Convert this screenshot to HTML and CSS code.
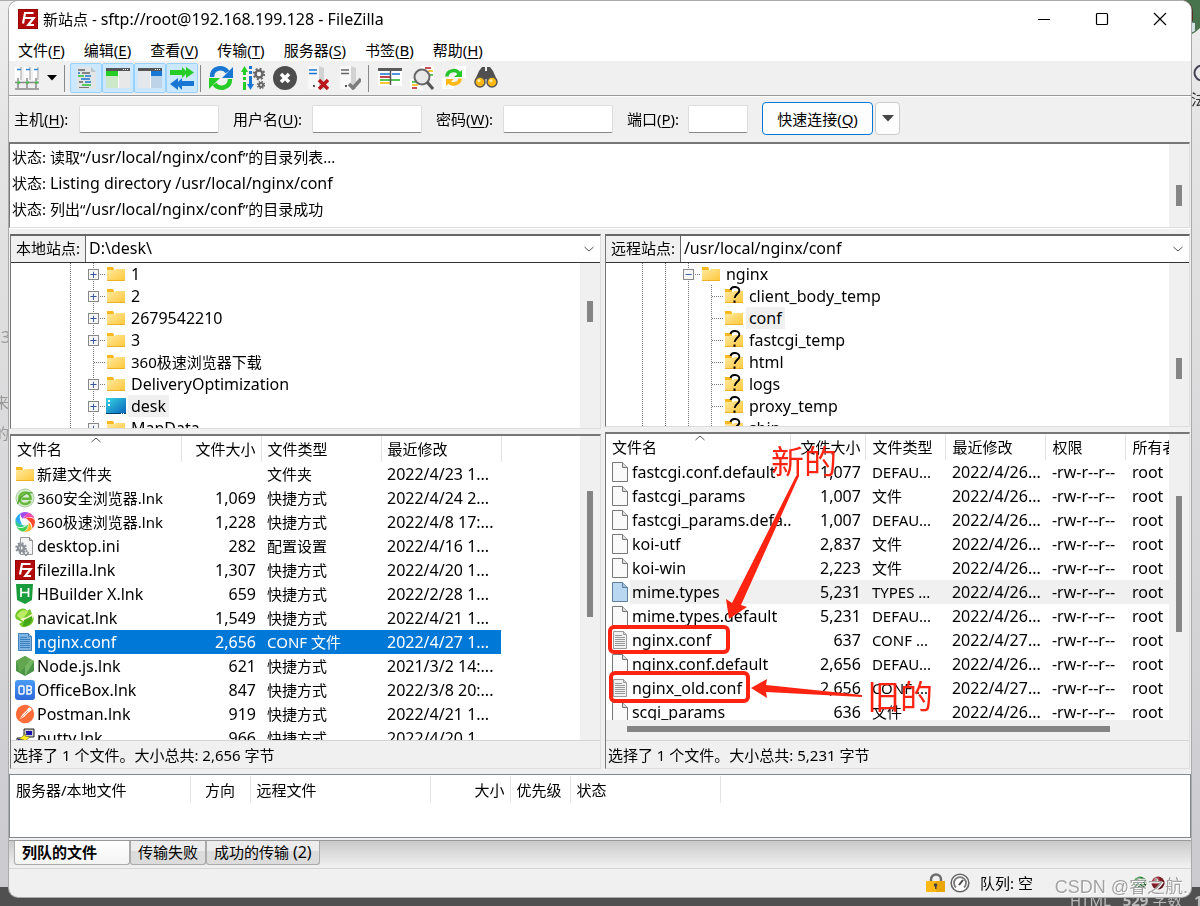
FILE: index.html
```html
<!DOCTYPE html>
<html lang="zh-CN">
<head>
<meta charset="utf-8">
<title>新站点 - FileZilla</title>
<link rel="stylesheet" href="styles.css">
</head>
<body>
<svg class="defs" aria-hidden="true">
  <defs>
    <linearGradient id="gold" x1="0" y1="0" x2="1" y2="1"><stop offset="0" stop-color="#ffe9a0"/><stop offset="1" stop-color="#ffc83a"/></linearGradient>
    <linearGradient id="sea" x1="0" y1="0" x2="1" y2="1"><stop offset="0" stop-color="#35d6e4"/><stop offset="1" stop-color="#0a63b8"/></linearGradient>
    <linearGradient id="blueapp" x1="0" y1="0" x2="0" y2="1"><stop offset="0" stop-color="#4a9bf5"/><stop offset="1" stop-color="#2e68d8"/></linearGradient>
    <radialGradient id="ledg" cx=".35" cy=".3" r=".8"><stop offset="0" stop-color="#9fe0a0"/><stop offset=".4" stop-color="#2b8a35"/><stop offset="1" stop-color="#0d4a15"/></radialGradient>
    <radialGradient id="ledr" cx=".35" cy=".3" r=".8"><stop offset="0" stop-color="#e0a0a0"/><stop offset=".4" stop-color="#8a1f28"/><stop offset="1" stop-color="#4a0a10"/></radialGradient>
  </defs>
  <symbol id="folder" viewBox="0 0 20 20"><path d="M1 3h6l1 2v5H1z" fill="#f8b820"/><path d="M1 6h8l1-1h9v12H1z" fill="url(#gold)"/><path d="M1 16h18v1H1z" fill="#eeb12c"/></symbol>
  <symbol id="ask" viewBox="0 0 20 20"><use href="#folder"/><path d="M6.500 4C7 1.600 9 .8 11.200 1c2.600.2 4.300 1.600 4.100 3.800-.2 2.700-4.300 3.500-4.700 7.200" fill="none" stroke="#000" stroke-width="1.900"/><path d="M9.500 14.500h2v2.300h-2z"/></symbol>
  <symbol id="desk" viewBox="0 0 20 20"><path d="M0 2h20v16H0z" fill="url(#sea)"/><path d="M0 17h20v1H0z" fill="#06406f"/><path d="M2 4h2v2H2zM2 8h2v2H2zM15 17h1v1h-1zM17 17h1v1h-1z" fill="#fff"/></symbol>
  <symbol id="file" viewBox="0 0 20 20"><path d="M2.500.5h10l5 5v14h-15z" fill="#fafafa" stroke="#777"/><path d="M12.500.5v5h5" fill="#ddd" stroke="#777"/></symbol>
  <symbol id="filesel" viewBox="0 0 20 20"><path d="M2.500.5h10l5 5v14h-15z" fill="#b9d7f1" stroke="#5f7f9c"/><path d="M12.500.5v5h5" fill="#9fc3e2" stroke="#5f7f9c"/></symbol>
  <symbol id="text" viewBox="0 0 20 20"><path d="M3.500 1.500h10l3 3v14h-13z" fill="#f1f1f1" stroke="#999"/><path d="M13.500 1.500v3h3" fill="#ccc" stroke="#999"/><path d="M5 5.500h7M5 7.500h10M5 9.500h10M5 11.500h10M5 13.500h10M5 15.500h10" stroke="#999"/></symbol>
  <symbol id="textsel" viewBox="0 0 20 20"><path d="M3.500 1.500h10l3 3v14h-13z" fill="#7db4e4" stroke="#4281b8"/><path d="M13.500 1.500v3h3" fill="#a8cdec" stroke="#4281b8"/><path d="M5 5.500h7M5 7.500h10M5 9.500h10M5 11.500h10M5 13.500h10M5 15.500h10" stroke="#3b7fbc"/></symbol>
  <symbol id="ie" viewBox="0 0 20 20"><circle cx="10" cy="10" r="9.300" fill="#d9ecd3"/><circle cx="10" cy="10" r="9" fill="none" stroke="#a8cf9b"/><path d="M15.300 13c-1 2-3 3-5.200 3-3.300 0-5.600-2.500-5.600-5.800C4.500 6.800 7 4.500 10 4.500c3.500 0 5.600 2.600 5.500 6.200H6.500" fill="none" stroke="#67b83a" stroke-width="2.600"/><path d="M2.500 16c2-7 9-13 15-11" fill="none" stroke="#4ea52c" stroke-width="1.300"/></symbol>
  <symbol id="wheel" viewBox="0 0 20 20"><path d="M8 7C6 5 5 3 5.500 1.300A10 10 0 0 1 14.500 1C11 2 9 4 8 7z" fill="#a04df0"/><path d="M9 7c0-4 3-6 6-6a10 10 0 0 1 4.500 6C16 4 12 5 9 7z" fill="#ee4cb4"/><path d="M10 7c4-3 8-1 9.700 1a10 10 0 0 1-2.700 9c1-4-1-8-7-10z" fill="#ff4a30"/><path d="M13 10c3 2 4 5 3.500 7.500a10 10 0 0 1-8 2.300c4-1 6-5 4.500-9.800z" fill="#ffb529"/><path d="M13 12c0 4-2 7-5 7.700a10 10 0 0 1-6.500-5C5 17 10 16 13 12z" fill="#3ed04f"/><path d="M11 13c-4 3-8 3-10 0A10 10 0 0 1 1 6c0 4 4 8 10 7z" fill="#31c98b"/><path d="M8 13C3 12 0 9 1 6a10 10 0 0 1 4.500-4.700C4 5 5 10 8 13z" fill="#29a8ff"/><circle cx="10" cy="10" r="3.600" fill="#fff"/></symbol>
  <symbol id="ini" viewBox="0 0 20 20"><path d="M5.500 1.500h9l3 3v14h-12z" fill="#f4f4f4" stroke="#999"/><path d="M14.500 1.500v3h3" fill="#ccc" stroke="#888"/><circle cx="6" cy="12" r="3" fill="none" stroke="#8b9299" stroke-width="2.500"/><circle cx="6" cy="12" r="4.800" fill="none" stroke="#8b9299" stroke-width="2" stroke-dasharray="2 1.770"/><circle cx="11" cy="17" r="2" fill="none" stroke="#8b9299" stroke-width="1.800" stroke-dasharray="1.500 .6"/></symbol>
  <symbol id="fz" viewBox="0 0 20 20"><path d="M0 0h20v20H0z" fill="#b30b0b"/><path d="M.5.5h19v19H.5z" fill="none" stroke="#700" stroke-dasharray="1 1"/><path d="M5 14.500L7 4h8.500M6 9h5.500M10.500 9h5.200l-5.400 7h5.700" fill="none" stroke="#fff" stroke-width="2.200"/></symbol>
  <symbol id="hb" viewBox="0 0 20 20"><path d="M1 0h17l-1 16-7 4-8-4z" fill="#1b9c3c"/><path d="M6 4v9M13.500 4v9M6 8.500h7.500" stroke="#fff" stroke-width="1.700"/></symbol>
  <symbol id="navi" viewBox="0 0 20 20"><path d="M1 5c4-6 10-5 11-2l3-2 3 7c3 7-5 12-11 11l-3-3 3-2-6-3c-1-2-1-4 0-6z" fill="#74c82a"/><path d="M2 8c2-6 9-7 11-4L7 12z" fill="#b9ec62"/><path d="M5 11l7-2 6-4c1 4-1 9-7 10z" fill="#f5f8c7"/><path d="M9 12l8-4c1 7-4 11-9 10z" fill="#43a718"/></symbol>
  <symbol id="node" viewBox="0 0 20 20"><path d="M10 0l9 5v10l-9 5-9-5V5z" fill="#4b9347"/><path d="M10 0l9 5-9 15z" fill="#75b864"/><path d="M1 5L10 0l5 4L5 17z" fill="#62a74f"/></symbol>
  <symbol id="obox" viewBox="0 0 20 20"><rect width="20" height="20" rx="3" fill="url(#blueapp)"/><rect x="4" y="6" width="5" height="8" rx="1.500" fill="none" stroke="#fff" stroke-width="1.400"/><path d="M12 6h2.500q1.800 0 1.800 2t-1.800 2H12h2.500q1.800 0 1.800 2t-1.800 2H12z" fill="none" stroke="#fff" stroke-width="1.400"/></symbol>
  <symbol id="post" viewBox="0 0 20 20"><circle cx="10" cy="10" r="9.200" fill="#ff6c37"/><path d="M5 15l2-4 6-6 2 2-6 6z" fill="#fff"/><path d="M6 14l7-7" stroke="#ff9a76"/><circle cx="14.500" cy="5.500" r="2" fill="#fff"/></symbol>
  <symbol id="putty" viewBox="0 0 20 20"><path d="M9 1h10v8H9z" fill="#ccc" stroke="#222"/><path d="M11 3h6v4h-6z" fill="#1510b0"/><path d="M2 10h9v8H2z" fill="#ccc" stroke="#222"/><path d="M3 11h6v4H3z" fill="#1510b0"/><path d="M12 5l-8 6 5 1-2 4 8-7-5-1z" fill="#ffee1c" stroke="#554" stroke-width=".5"/></symbol>
  <symbol id="chev" viewBox="0 0 12 8"><path d="M1.500 2L6 6l4.500-4" fill="none" stroke="#555"/></symbol>
  <symbol id="server" viewBox="0 0 24 24"><path d="M3 0h12l3 2v21H3z" fill="#f8f8f8"/><path d="M14 0l5 2v21h-5z" fill="#d2d2d2"/><path d="M4 4h8M4 7.500h8" stroke="currentColor" stroke-width="1.500"/><path d="M8 19h2v2H8z" fill="#555"/></symbol>
</svg>

<div class="backdrop" aria-hidden="true">
  <span class="peek top"></span>
  <svg class="peek avatar" viewBox="0 0 16 36"><path d="M0 0h16v28q-8 8-16 8z" fill="#47734d"/><path d="M0 0q9 2 9 14v7H0z" fill="#5a2b20"/><path d="M0 8l8 4-1 9-7 2z" fill="#e9a58c"/><path d="M0 22l11 1v8L0 36z" fill="#d5e0e5"/></svg>
  <span class="peek left-a">93</span>
  <span class="peek left-b">来</span>
  <span class="peek left-c">的</span>
  <svg class="peek ring" viewBox="0 0 12 20"><circle cx="10" cy="10" r="7.500" fill="none" stroke="#445" stroke-width="2"/></svg>
  <span class="peek right-a">法</span>
  <span class="peek foot">HTML &nbsp; <b>529</b> 字数 &nbsp; <b>10</b></span>
</div>

<main class="window">
  <header class="titlebar">
    <svg class="ico"><use href="#fz"/></svg>
    <h1>新站点 - <span class="en">sftp://root@192.168.199.128 - FileZilla</span></h1>
    <button aria-label="最小化"><svg viewBox="0 0 14 14"><path d="M1 7.500h12" stroke="#000"/></svg></button>
    <button aria-label="最大化"><svg viewBox="0 0 14 14"><rect x="1.500" y="1.500" width="11" height="11" rx="1" fill="none" stroke="#000" stroke-width="1.200"/></svg></button>
    <button aria-label="关闭"><svg viewBox="0 0 14 14"><path d="M1 1l12 12M13 1L1 13" stroke="#000" stroke-width="1.200"/></svg></button>
  </header>

  <nav class="menu">
    <button>文件(<u>F</u>)</button><button>编辑(<u>E</u>)</button><button>查看(<u>V</u>)</button><button>传输(<u>T</u>)</button><button>服务器(<u>S</u>)</button><button>书签(<u>B</u>)</button><button>帮助(<u>H</u>)</button>
  </nav>

  <div class="toolbar">
    <button aria-label="站点管理器"><svg viewBox="0 0 24 24"><path d="M0 1h6v13H0zM9 1h6v13H9zM18 1h6v13h-6z" fill="#fff"/><path d="M5 1h2v13H5zM14 1h2v13h-2zM22 1h2v13h-2z" fill="#ccc"/><path d="M2 3.500h4M11 3.500h4M19 3.500h4" stroke="#2f83d0" stroke-width="1.500"/><path d="M3 12v3M12 12v3M21 12v3M0 16.500h24M3 17v5M12 17v5M21 17v5M0 23h24" stroke="#888" stroke-width="1.500"/><path d="M2 15.500h3v2H2zM11 15.500h3v2h-3zM20 15.500h3v2h-3z" fill="#3bbd42"/></svg></button>
    <button class="narrow" aria-label="打开站点列表"><svg viewBox="0 0 10 6"><path d="M0 0h10L5 5.500z"/></svg></button>
    <i class="sep"></i>
    <button class="on" aria-label="消息日志"><svg viewBox="0 0 24 24"><path d="M3 1h14l5 5v17H3z" fill="#e1e5e8"/><path d="M17 1l5 5h-5z" fill="#b9c4cc"/><path d="M4 4h7M8 7h8M5 16h4" stroke="#666" stroke-width="1.600"/><path d="M4 10h6M8 19h9" stroke="#29c431" stroke-width="1.600"/><path d="M11 10h6M7 13h9" stroke="#1f76cc" stroke-width="1.600"/><path d="M4 7h2M11 16h6" stroke="#1f76cc" stroke-width="1.600"/><path d="M5 21.500h10" stroke="#777"/></svg></button>
    <button class="on" aria-label="本地目录树"><svg viewBox="0 0 24 24"><path d="M0 2h24v20H0z" fill="#e8e8e8"/><path d="M0 2h24v3H0z" fill="#555"/><path d="M0 5h12v5H0z" fill="#27cd27"/><path d="M0 10h12v12H0z" fill="#cce8c9"/><path d="M12 5h1v17h-1z" fill="#fff"/><path d="M17 3h1v1h-1zM19 3h1v1h-1zM21 3h1v1h-1z" fill="#fff"/></svg></button>
    <button class="on" aria-label="远程目录树"><svg viewBox="0 0 24 24"><path d="M0 2h24v20H0z" fill="#e4e8ec"/><path d="M0 2h24v3H0z" fill="#555"/><path d="M13 5h11v5H13z" fill="#1976d2"/><path d="M13 10h11v12H13z" fill="#bdd3e8"/><path d="M12 5h1v17h-1z" fill="#fff"/><path d="M17 3h1v1h-1zM19 3h1v1h-1zM21 3h1v1h-1z" fill="#fff"/></svg></button>
    <button class="on" aria-label="传输队列"><svg viewBox="0 0 24 24"><path d="M0 4h12V1l4 4V1l8 5.500L16 12V8l-4 4V9H0z" fill="#27cd27"/><path d="M24 15H12v-3l-4 4v-4L0 18l8 6v-4l4 4v-4h12z" fill="#1976d2"/></svg></button>
    <i class="sep close"></i>
    <button aria-label="刷新"><svg viewBox="0 0 24 24"><path d="M3 11C3 1 15 0 18.500 6" fill="none" stroke="#1976d2" stroke-width="4.500"/><path d="M24 1v11H13z" fill="#1976d2"/><path d="M21 13c0 10-12 11-15.500 5" fill="none" stroke="#27cd27" stroke-width="4.500"/><path d="M0 23V12h11z" fill="#27cd27"/></svg></button>
    <button aria-label="处理队列"><svg viewBox="0 0 24 24"><path d="M3.500 4v5M3.500 11v3M3.500 16v8" stroke="#27cd27" stroke-width="3"/><path d="M0 6l3.500-6L7 6z" fill="#27cd27"/><path d="M9.500 0v3M9.500 5v3M9.500 10v9" stroke="#1976d2" stroke-width="3"/><path d="M6 18h7l-3.500 6z" fill="#1976d2"/><circle cx="18" cy="8" r="3.500" fill="none" stroke="#666" stroke-width="2.500"/><circle cx="18" cy="8" r="5.200" fill="none" stroke="#666" stroke-width="2" stroke-dasharray="2 2.080"/><circle cx="20" cy="19" r="2" fill="none" stroke="#666" stroke-width="2"/><circle cx="20" cy="19" r="3.500" fill="none" stroke="#666" stroke-width="1.500" stroke-dasharray="1.400 1.350"/></svg></button>
    <button aria-label="取消"><svg viewBox="0 0 24 24"><circle cx="12" cy="12" r="12" fill="#4d4d4d"/><path d="M8 8l8 8M16 8l-8 8" stroke="#fff" stroke-width="3.500"/></svg></button>
    <button class="blue" aria-label="断开连接"><svg viewBox="0 0 24 24"><use href="#server"/><path d="M14 14l9 9M23 14l-9 9" stroke="#b8161d" stroke-width="3.500"/></svg></button>
    <button class="grey" aria-label="重新连接"><svg viewBox="0 0 24 24"><use href="#server"/><path d="M12 18l4 4 8-9" fill="none" stroke="#7d7d7d" stroke-width="3.500"/></svg></button>
    <i class="sep"></i>
    <button aria-label="文件过滤"><svg viewBox="0 0 24 24"><path d="M0 2h24v18H0z" fill="#fff"/><path d="M0 2h24v3H0z" fill="#5b5b5b"/><path d="M2 8h10M14 8h8" stroke="#1976d2" stroke-width="1.600"/><path d="M2 11h10" stroke="#b8161d" stroke-width="1.600"/><path d="M2 14h20" stroke="#27b82c" stroke-width="1.600"/><path d="M2 17h10" stroke="#ffb900" stroke-width="1.600"/><path d="M12.500 5v14" stroke="#555" stroke-width="1.500"/></svg></button>
    <button aria-label="目录比较"><svg viewBox="0 0 24 24"><path d="M11 0h13v13H11zM0 13h13v11H0z" fill="#fff"/><path d="M15 2h6M2 22h5" stroke="#b8161d" stroke-width="1.600"/><path d="M18 5h5M2 19h6" stroke="#ffb900" stroke-width="1.600"/><path d="M19 9h4M2 16h5" stroke="#27b82c" stroke-width="1.600"/><circle cx="12" cy="11" r="7.500" fill="#e8e8e8" stroke="#666" stroke-width="2"/><path d="M17 16l6 7" stroke="#555" stroke-width="3"/></svg></button>
    <button aria-label="同步浏览"><svg viewBox="0 0 24 24"><path d="M13 0h11v12H13zM0 12h12v11H0z" fill="#fff"/><path d="M5 10.500c0-6 9-8 12-3" fill="none" stroke="#27c42c" stroke-width="3.500"/><path d="M20 4v7h-8z" fill="#27c42c"/><path d="M18 12.500c0 6-9 7-11 3" fill="none" stroke="#fdb813" stroke-width="3.500"/><path d="M4 20v-7h8z" fill="#fdb813"/></svg></button>
    <button aria-label="查找文件"><svg viewBox="0 0 24 24"><path d="M5 5l3-4h3v4h2V1h3l3 4 4 9-6 3-5-4-5 4-6-3z" fill="#4f4f4f"/><circle cx="6" cy="16" r="5" fill="#fdb813" stroke="#555" stroke-width="1.500"/><circle cx="18" cy="16" r="5" fill="#fdb813" stroke="#555" stroke-width="1.500"/><circle cx="5" cy="14.500" r="1.500" fill="#fff0b0"/><circle cx="17" cy="14.500" r="1.500" fill="#fff0b0"/></svg></button>
  </div>

  <form class="quick">
    <label class="w1" for="host">主机(<u>H</u>):</label><input id="host" class="long">
    <label class="w2" for="user">用户名(<u>U</u>):</label><input id="user">
    <label class="w3" for="pass">密码(<u>W</u>):</label><input id="pass" type="password">
    <label class="w4" for="port">端口(<u>P</u>):</label><input id="port" class="short">
    <button type="button" class="connect">快速连接(<u>Q</u>)</button>
    <button type="button" class="drop" aria-label="历史"><svg viewBox="0 0 12 7"><path d="M0 0h12L6 6.500z" fill="#444"/></svg></button>
  </form>

  <section class="log">
    <div class="lines">
      <p>状态: 读取“<span class="en">/usr/local/nginx/conf</span>”的目录列表...</p>
      <p>状态: <span class="en">Listing directory /usr/local/nginx/conf</span></p>
      <p>状态: 列出“<span class="en">/usr/local/nginx/conf</span>”的目录成功</p>
    </div>
    <div class="vbar"><i class="thumb log-thumb"></i></div>
  </section>

  <div class="panes">
    <section class="pane local">
      <div class="upper local-upper">
        <div class="address">
          <label for="lpath">本地站点:</label>
          <div class="combo en"><select id="lpath"><option>D:\desk\</option></select><svg><use href="#chev"/></svg></div>
        </div>
        <div class="scroller">
          <ul class="tree local-tree">
            <li><i class="guide"></i><i class="branch"><button aria-label="展开">+</button></i><svg><use href="#folder"/></svg><span class="en">1</span></li>
            <li><i class="guide"></i><i class="branch"><button aria-label="展开">+</button></i><svg><use href="#folder"/></svg><span class="en">2</span></li>
            <li><i class="guide"></i><i class="branch"><button aria-label="展开">+</button></i><svg><use href="#folder"/></svg><span class="en">2679542210</span></li>
            <li><i class="guide"></i><i class="branch"><button aria-label="展开">+</button></i><svg><use href="#folder"/></svg><span class="en">3</span></li>
            <li><i class="guide"></i><i class="branch"></i><svg><use href="#folder"/></svg><span>360极速浏览器下载</span></li>
            <li><i class="guide"></i><i class="branch"><button aria-label="展开">+</button></i><svg><use href="#folder"/></svg><span class="en">DeliveryOptimization</span></li>
            <li><i class="guide"></i><i class="branch"><button aria-label="展开">+</button></i><svg><use href="#desk"/></svg><span class="en current">desk</span></li>
            <li><i class="guide"></i><i class="branch"><button aria-label="展开">+</button></i><svg><use href="#folder"/></svg><span class="en">MapData</span></li>
          </ul>
          <div class="vbar"><i class="thumb ltree-thumb"></i></div>
        </div>
      </div>
      <div class="lower">
        <div class="scroller">
          <div class="list">
            <svg class="sort"><use href="#chev"/></svg>
            <table class="local-files">
              <colgroup><col class="c170"><col class="c80"><col class="c120"><col class="c120"></colgroup>
              <thead><tr><th>文件名</th><th class="num">文件大小</th><th>文件类型</th><th>最近修改</th></tr></thead>
              <tbody>
                <tr><td><svg><use href="#folder"/></svg>新建文件夹</td><td class="num"></td><td>文件夹</td><td class="en">2022/4/23 1...</td></tr>
                <tr><td><svg><use href="#ie"/></svg>360安全浏览器.lnk</td><td class="num">1,069</td><td>快捷方式</td><td class="en">2022/4/24 2...</td></tr>
                <tr><td><svg><use href="#wheel"/></svg>360极速浏览器.lnk</td><td class="num">1,228</td><td>快捷方式</td><td class="en">2022/4/8 17:...</td></tr>
                <tr><td class="en"><svg><use href="#ini"/></svg>desktop.ini</td><td class="num">282</td><td>配置设置</td><td class="en">2022/4/16 1...</td></tr>
                <tr><td class="en"><svg><use href="#fz"/></svg>filezilla.lnk</td><td class="num">1,307</td><td>快捷方式</td><td class="en">2022/4/20 1...</td></tr>
                <tr><td class="en"><svg><use href="#hb"/></svg>HBuilder X.lnk</td><td class="num">659</td><td>快捷方式</td><td class="en">2022/2/28 1...</td></tr>
                <tr><td class="en"><svg><use href="#navi"/></svg>navicat.lnk</td><td class="num">1,549</td><td>快捷方式</td><td class="en">2022/4/21 1...</td></tr>
                <tr class="picked"><td class="en"><svg><use href="#textsel"/></svg>nginx.conf</td><td class="num">2,656</td><td>CONF 文件</td><td class="en">2022/4/27 1...</td></tr>
                <tr><td class="en"><svg><use href="#node"/></svg>Node.js.lnk</td><td class="num">621</td><td>快捷方式</td><td class="en">2021/3/2 14:...</td></tr>
                <tr><td class="en"><svg><use href="#obox"/></svg>OfficeBox.lnk</td><td class="num">847</td><td>快捷方式</td><td class="en">2022/3/8 20:...</td></tr>
                <tr><td class="en"><svg><use href="#post"/></svg>Postman.lnk</td><td class="num">919</td><td>快捷方式</td><td class="en">2022/4/21 1...</td></tr>
                <tr><td class="en"><svg><use href="#putty"/></svg>putty.lnk</td><td class="num">966</td><td>快捷方式</td><td class="en">2022/4/20 1...</td></tr>
              </tbody>
            </table>
          </div>
          <div class="vbar"><i class="thumb llist-thumb"></i></div>
        </div>
        <p class="summary">选择了 1 个文件。大小总共: 2,656 字节</p>
      </div>
    </section>

    <section class="pane remote">
      <div class="upper remote-upper">
        <div class="address">
          <label for="rpath">远程站点:</label>
          <div class="combo en"><select id="rpath"><option>/usr/local/nginx/conf</option></select><svg><use href="#chev"/></svg></div>
        </div>
        <div class="scroller">
          <ul class="tree remote-tree">
            <li><i class="guide"></i><i class="guide"></i><i class="branch"><button aria-label="折叠">−</button></i><svg><use href="#folder"/></svg><span class="en">nginx</span></li>
            <li><i class="guide"></i><i class="guide"></i><i class="guide"></i><i class="branch"></i><svg><use href="#ask"/></svg><span class="en">client_body_temp</span></li>
            <li><i class="guide"></i><i class="guide"></i><i class="guide"></i><i class="branch"></i><svg><use href="#folder"/></svg><span class="en current">conf</span></li>
            <li><i class="guide"></i><i class="guide"></i><i class="guide"></i><i class="branch"></i><svg><use href="#ask"/></svg><span class="en">fastcgi_temp</span></li>
            <li><i class="guide"></i><i class="guide"></i><i class="guide"></i><i class="branch"></i><svg><use href="#ask"/></svg><span class="en">html</span></li>
            <li><i class="guide"></i><i class="guide"></i><i class="guide"></i><i class="branch"></i><svg><use href="#ask"/></svg><span class="en">logs</span></li>
            <li><i class="guide"></i><i class="guide"></i><i class="guide"></i><i class="branch"></i><svg><use href="#ask"/></svg><span class="en">proxy_temp</span></li>
            <li><i class="guide"></i><i class="guide"></i><i class="guide"></i><i class="branch"></i><svg><use href="#ask"/></svg><span class="en">sbin</span></li>
          </ul>
          <div class="vbar"><i class="thumb rtree-thumb"></i></div>
        </div>
      </div>
      <div class="lower">
        <div class="scroller">
          <div class="list">
            <svg class="sort"><use href="#chev"/></svg>
            <table class="remote-files">
              <colgroup><col class="c185"><col class="c75"><col class="c80"><col class="c100"><col class="c80"><col class="c80"></colgroup>
              <thead><tr><th>文件名</th><th class="num">文件大小</th><th>文件类型</th><th>最近修改</th><th>权限</th><th>所有者/组</th></tr></thead>
              <tbody>
                <tr><td class="en"><svg><use href="#file"/></svg>fastcgi.conf.default</td><td class="num">1,077</td><td>DEFAU...</td><td class="en">2022/4/26...</td><td class="en">-rw-r--r--</td><td class="en">root</td></tr>
                <tr><td class="en"><svg><use href="#file"/></svg>fastcgi_params</td><td class="num">1,007</td><td>文件</td><td class="en">2022/4/26...</td><td class="en">-rw-r--r--</td><td class="en">root</td></tr>
                <tr><td class="en"><svg><use href="#file"/></svg>fastcgi_params.defa...</td><td class="num">1,007</td><td>DEFAU...</td><td class="en">2022/4/26...</td><td class="en">-rw-r--r--</td><td class="en">root</td></tr>
                <tr><td class="en"><svg><use href="#file"/></svg>koi-utf</td><td class="num">2,837</td><td>文件</td><td class="en">2022/4/26...</td><td class="en">-rw-r--r--</td><td class="en">root</td></tr>
                <tr><td class="en"><svg><use href="#file"/></svg>koi-win</td><td class="num">2,223</td><td>文件</td><td class="en">2022/4/26...</td><td class="en">-rw-r--r--</td><td class="en">root</td></tr>
                <tr class="faded"><td class="en"><svg><use href="#filesel"/></svg>mime.types</td><td class="num">5,231</td><td>TYPES ...</td><td class="en">2022/4/26...</td><td class="en">-rw-r--r--</td><td class="en">root</td></tr>
                <tr><td class="en"><svg><use href="#file"/></svg>mime.types.default</td><td class="num">5,231</td><td>DEFAU...</td><td class="en">2022/4/26...</td><td class="en">-rw-r--r--</td><td class="en">root</td></tr>
                <tr><td class="en"><svg><use href="#text"/></svg>nginx.conf</td><td class="num">637</td><td>CONF ...</td><td class="en">2022/4/27...</td><td class="en">-rw-r--r--</td><td class="en">root</td></tr>
                <tr><td class="en"><svg><use href="#file"/></svg>nginx.conf.default</td><td class="num">2,656</td><td>DEFAU...</td><td class="en">2022/4/26...</td><td class="en">-rw-r--r--</td><td class="en">root</td></tr>
                <tr><td class="en"><svg><use href="#text"/></svg>nginx_old.conf</td><td class="num">2,656</td><td>CONF ...</td><td class="en">2022/4/27...</td><td class="en">-rw-r--r--</td><td class="en">root</td></tr>
                <tr><td class="en"><svg><use href="#file"/></svg>scgi_params</td><td class="num">636</td><td>文件</td><td class="en">2022/4/26...</td><td class="en">-rw-r--r--</td><td class="en">root</td></tr>
              </tbody>
            </table>
          </div>
          <div class="vbar"><i class="thumb rlist-thumb"></i></div>
        </div>
        <div class="hbar"><i></i></div>
        <p class="summary">选择了 1 个文件。大小总共: 5,231 字节</p>
        <div class="marks">
          <svg viewBox="0 0 340 300"><rect x="4" y="193" width="118" height="25" rx="4" fill="none" stroke="#ff2312" stroke-width="4"/><rect x="5" y="239" width="137" height="28" rx="4" fill="none" stroke="#ff2312" stroke-width="4"/><path d="M190 42h3L135 171l6 2-18 12-3-20 6 4z" fill="#ff2312"/><path d="M145 254l16-9-1 6 96 10v2l-96-5 1 6z" fill="#ff2312"/></svg>
          <span class="new">新的</span>
          <span class="old">旧的</span>
        </div>
      </div>
    </section>
  </div>

  <section class="queue">
    <table>
      <colgroup><col class="c180"><col class="c60"><col class="c180"><col class="c80"><col class="c60"><col class="c150"></colgroup>
      <thead><tr><th>服务器/本地文件</th><th class="mid">方向</th><th>远程文件</th><th class="num">大小</th><th>优先级</th><th>状态</th></tr></thead>
    </table>
  </section>

  <div class="tabs">
    <button class="active">列队的文件</button><button>传输失败</button><button>成功的传输 <span class="en">(2)</span></button>
  </div>

  <footer class="status">
    <svg class="ico" viewBox="0 0 20 20"><path d="M5 9V6.500a5 5 0 0 1 10 0V9" fill="none" stroke="#6d6d6d" stroke-width="2.500"/><rect y="8" width="19" height="11" rx="1" fill="#fdb813"/><path d="M10 8h9v11h-9z" fill="#e9a50c"/><circle cx="9.500" cy="12" r="1.800" fill="#444"/><path d="M9 12h1.500v4H9z" fill="#444"/></svg>
    <svg class="ico" viewBox="0 0 20 20"><circle cx="10" cy="10" r="8.800" fill="#fff" stroke="#666" stroke-width="1.600"/><path d="M6 14.500A6 6 0 1 1 14 14.500" fill="none" stroke="#777" stroke-width="1.800"/><path d="M9 12l4-5" stroke="#444" stroke-width="2"/></svg>
    <span>队列: 空</span>
    <svg class="leds" viewBox="0 0 44 20"><circle cx="10" cy="10" r="6.500" fill="url(#ledg)"/><circle cx="28" cy="10" r="6.500" fill="url(#ledr)"/></svg>
  </footer>
</main>
<div class="watermark">CSDN @睿之航.</div>
</body>
</html>
```
FILE: styles.css
```css
* { box-sizing: border-box; }
body {
  margin: 0;
  height: 100vh;
  min-height: 640px;
  padding: 1px 9px 9px;
  display: flex;
  background: linear-gradient(#eee 0, #e4e4e4 15%, #cbcbcf 97.9%, #505050 97.9%);
  font: 15px/22px "Noto Sans", "Noto Sans CJK SC", sans-serif;
  color: #000;
}
button, input, select { font: inherit; color: inherit; }
button { margin: 0; padding: 0; border: 0; background: none; }
h1, p, ul { margin: 0; padding: 0; }
i { font-style: normal; }
svg { display: block; flex: none; }
.defs { position: absolute; width: 0; height: 0; }
.en { font-size: 16px; }
.ico { width: 20px; height: 20px; }

.backdrop { position: fixed; inset: 0; overflow: hidden; color: #999; }
.peek { position: absolute; line-height: 20px; }
.top { left: 0; right: 0; top: 0; height: 1px; background: linear-gradient(90deg, #aaa 1021px, #c0604c 1021px, #c0604c 1132px, #aaa 1132px); }
.avatar { right: 0; top: 0; width: 16px; height: 36px; }
.left-a { left: -9px; top: 327px; font-size: 17px; }
.left-b { left: -6px; top: 392px; }
.left-c { left: -6px; top: 423px; }
.ring { right: -4px; top: 63px; width: 12px; height: 20px; }
.right-a { right: -6px; top: 89px; color: #333; }
.foot { left: 1070px; bottom: -4px; color: #bbb; white-space: nowrap; }

.window {
  position: relative;
  flex: 1;
  min-width: 0;
  display: flex;
  flex-direction: column;
  overflow: hidden;
  border-radius: 9px;
  background: #f0f0f0;
  box-shadow: 0 0 0 1px #aaa;
}
.titlebar { flex: none; display: flex; align-items: center; height: 37px; padding: 0 2px 2px 9px; background: #fff; }
.titlebar h1 { flex: 1; padding-left: 5px; font-size: 15px; font-weight: 400; line-height: 22px; }
.titlebar button { width: 58px; height: 35px; display: grid; place-items: center; }
.titlebar button svg { width: 14px; height: 14px; }

.menu { flex: none; display: flex; height: 23px; background: #fff; }
.menu button { padding: 0 10px 0 9px; }
u { text-underline-offset: 2px; text-decoration-thickness: 1px; }

.toolbar { flex: none; display: flex; align-items: center; height: 35px; padding: 0 2px; border-bottom: 1px solid #999; }
.toolbar button { width: 32px; height: 30px; display: grid; place-items: center; border: 1px solid transparent; border-radius: 2px; }
.toolbar button svg { width: 24px; height: 24px; }
.toolbar .narrow { width: 18px; }
.toolbar .narrow svg { width: 10px; height: 6px; }
.toolbar .on { background: #cce8ff; border-color: #99d1ff; }
.toolbar .sep { width: 1px; height: 27px; margin: 0 5px 0 3px; background: #888; }
.toolbar .close { margin: 0 4px 0 2px; }
.blue { color: #1976d2; }
.grey { color: #666; }

.quick { flex: none; display: flex; align-items: center; height: 46px; padding: 0 5px 2px; border-top: 1px solid #fff; }
.quick label { white-space: nowrap; }
.w1 { width: 65px; }
.w2 { width: 79px; }
.w3 { width: 67px; }
.w4 { width: 61px; }
.quick input { width: 110px; height: 28px; margin-right: 14px; border: 1px solid #ddd; border-bottom-color: #888; border-radius: 2px; background: #fff; }
.quick .long { width: 140px; }
.quick .short { width: 60px; }
.connect { width: 111px; height: 33px; border: 1px solid #0078d4; border-radius: 4px; background: #fdfdfd; }
.quick .drop { width: 25px; height: 33px; margin-left: 2px; display: grid; place-items: center; border: 1px solid #ccc; border-radius: 4px; background: #fdfdfd; }
.drop svg { width: 12px; height: 7px; }

.log { flex: none; display: flex; height: 86px; margin-right: 1px; border: 1px solid #ddd; border-top: 2px solid #777; border-left-color: #777; background: #fff; }
.lines { flex: 1; padding: 0 2px; line-height: 26px; }
.vbar { flex: none; width: 20px; background: #f0f0f0; }
.thumb { display: block; width: 6px; margin-left: 7px; background: #858585; }
.log-thumb { height: 21px; margin-top: 41px; }
.ltree-thumb { height: 21px; margin-top: 38px; }
.llist-thumb { height: 126px; margin-top: 55px; }
.rtree-thumb { height: 21px; margin-top: 95px; }
.rlist-thumb { height: 136px; margin-top: 62px; }

.panes { flex: 1; min-height: 0; display: flex; gap: 4px; padding: 5px 1px 0; border-top: 1px solid #fff; }
.pane { min-width: 0; display: flex; flex-direction: column; gap: 5px; }
.local { flex: 101 1 0; }
.remote { flex: 100 1 0; }
.upper { flex: none; display: flex; flex-direction: column; border: 1px solid #ddd; border-top: 2px solid #666; border-left-color: #777; }
.local-upper { height: 195px; }
.remote-upper { height: 193px; }
.address { display: flex; flex: none; height: 27px; border-bottom: 1px solid #333; }
.address label { width: 75px; padding: 1px 0 0 5px; border-right: 1px solid #666; }
.combo { flex: 1; display: grid; grid-template-columns: 1fr 20px; align-items: center; background: #fff; }
.combo select { grid-column: 1 / 3; grid-row: 1; height: 26px; padding: 0 3px 2px; appearance: none; border: 0; background: none; }
.combo svg { grid-column: 2; grid-row: 1; width: 12px; height: 8px; margin-left: 3px; pointer-events: none; }
.scroller { flex: 1; min-height: 0; display: flex; overflow: hidden; background: #fff; }

.tree { flex: 1; overflow: hidden; list-style: none; }
.tree li { display: flex; align-items: center; height: 22px; }
.local-tree { padding-left: 48px; }
.remote-tree { padding-left: 25px; }
.guide, .branch { flex: none; width: 23px; height: 22px; background: repeating-linear-gradient(#777 0 1px, transparent 1px 2px) 11px 0 / 1px 22px no-repeat; }
.branch {
  width: 24px;
  display: grid;
  align-items: center;
  background:
    repeating-linear-gradient(#777 0 1px, transparent 1px 2px) 11px 0 / 1px 22px no-repeat,
    repeating-linear-gradient(90deg, #777 0 1px, transparent 1px 2px) 12px 11px / 12px 1px no-repeat;
}
.branch button { width: 11px; height: 11px; margin-left: 6px; border: 1px solid #888; background: #f6f6f6; color: #34549b; font-size: 13px; line-height: 9px; }
.tree svg { width: 20px; height: 20px; }
.tree span { padding: 0 3px; margin-left: 2px; white-space: nowrap; }
.current { background: #f0f0f0; }

.lower { position: relative; flex: 1; min-height: 0; display: flex; flex-direction: column; border: 1px solid #ddd; border-top: 2px solid #777; border-left-color: #777; }
.list { position: relative; flex: 1; overflow: hidden; }
.sort { position: absolute; left: 79px; top: 0; width: 12px; height: 8px; transform: scaleY(-1); }
.remote .sort { left: 88px; }
table { table-layout: fixed; border-collapse: collapse; }
.local-files { width: 490px; }
.remote-files { width: 600px; }
.queue table { width: 710px; }
.c60 { width: 60px; } .c75 { width: 75px; } .c80 { width: 80px; } .c100 { width: 100px; }
.c120 { width: 120px; } .c150 { width: 150px; } .c170 { width: 170px; } .c180 { width: 180px; } .c185 { width: 185px; }
th, td { padding: 0 0 0 6px; overflow: hidden; text-align: left; font-weight: 400; white-space: nowrap; line-height: 24px; }
th { height: 26px; border-right: 1px solid #e3e3e3; }
td { height: 24px; }
td:first-child { padding-left: 4px; }
td svg { float: left; width: 20px; height: 20px; margin: 2px 2px 0 0; }
.num { padding: 0 5px 0 0; text-align: right; }
td.num { font-size: 16px; }
.mid { padding: 0; text-align: center; }
.picked td { background: #0078d7; color: #fff; }
.picked td:first-child { background: linear-gradient(90deg, #fff 24px, #0078d7 24px); }
.faded td { background: #f0f0f0; }
.faded td:first-child { background: linear-gradient(90deg, #fff 24px, #f0f0f0 24px); }
.hbar { flex: none; height: 20px; padding: 6px 79px 0 21px; }
.hbar i { display: block; height: 6px; background: #858585; }
.summary { flex: none; height: 28px; padding: 3px 2px; border-top: 1px solid #d5d5d5; }

.marks { position: absolute; left: 0; top: 0; width: 340px; height: 300px; color: #ff2312; font-size: 33px; line-height: 40px; pointer-events: none; }
.marks span { position: absolute; font-family: "Noto Sans CJK SC", sans-serif; }
.new { left: 165px; top: 6px; }
.old { left: 261px; top: 241px; }

.queue { flex: none; height: 64px; margin-top: 5px; padding-top: 1px; border: 1px solid #828790; background: #fff; }
.queue th { height: 27px; }
.tabs { flex: none; display: flex; align-items: flex-start; height: 29px; margin-top: 2px; padding-left: 5px; border-top: 1px solid #999; border-bottom: 1px solid #d5d5d5; background: linear-gradient(#c9c9c9, #f2f2f2); }
.tabs button { height: 24px; padding: 0 7px 2px; border: 1px solid #aaa; border-top: 0; border-radius: 0 0 3px 3px; background: linear-gradient(#ececec 45%, #dcdcdc 45%); line-height: 20px; }
.tabs .active { width: 116px; background: linear-gradient(#fff, #f4f4f4); font-weight: 700; text-align: left; }
.status { flex: none; display: flex; align-items: center; gap: 4px; height: 28px; padding: 0 17px 0 917px; }
.status span { padding-left: 6px; white-space: nowrap; }
.status .leds { width: 44px; height: 20px; margin-left: auto; }
.watermark { position: absolute; right: 12px; bottom: 6px; color: #a3a3a3; font: 18px/26px "Liberation Sans", "Noto Sans CJK SC", sans-serif; text-shadow: 1px 1px 0 #fff; pointer-events: none; }
```
